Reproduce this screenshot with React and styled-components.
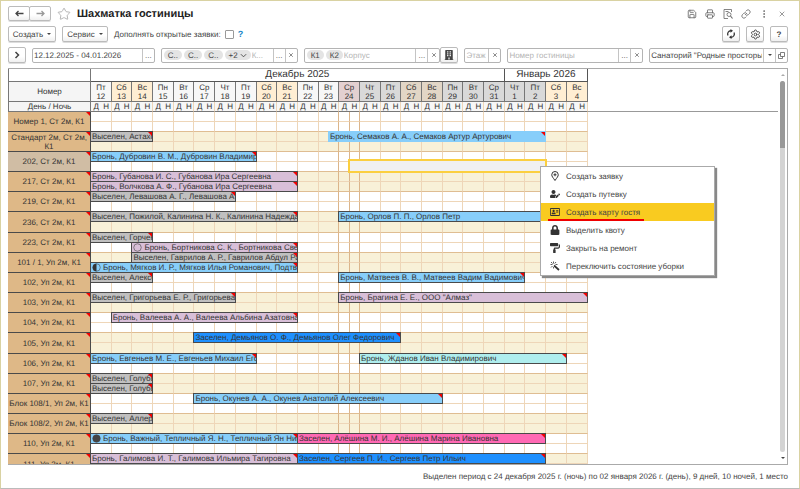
import React from 'react';
import { default as styled, createGlobalStyle, css } from 'styled-components';
import {
  Link,
  MoreVertical,
  Printer,
  Save,
  Settings,
  Star,
  X,
} from 'lucide-react';
import {
  FaBuilding,
  FaLock,
  FaPaintRoller,
  FaRegAddressCard,
  FaUserEdit,
} from 'react-icons/fa';

const BRONZE = '#deb887';
const LINE = '#eed6b8';
const DARK = '#4a4a4a';

const colors = {
  gray: '#c0c0c0',
  sky: '#87cefa',
  thistle: '#d8bfd8',
  blue: '#1e90ff',
  mint: '#afeeee',
  pink: '#ff69b4',
};

const GlobalStyle = createGlobalStyle`
  * {
    box-sizing: border-box;
  }

  body {
    margin: 0;
    background: #fff;
    color: #444;
    font-family: 'Liberation Sans', Arial, sans-serif;
    font-size: 8px;
    text-rendering: geometricPrecision;
  }

  button, input, select {
    font: inherit;
    color: inherit;
    text-rendering: inherit;
  }
`;

const Window = styled.div`
  position: relative;
  display: flex;
  flex-direction: column;
  height: 100vh;
  padding: 4px 11px 0 7px;
  border: 1px solid #d9d2a2;
  border-bottom-color: #bbb;
`;

const TitleBar = styled.header`
  display: flex;
  align-items: center;
  height: 17px;
`;

const Title = styled.h1`
  flex: 1;
  margin: 0 0 0 6px;
  color: #222;
  font-size: 11px;
  font-weight: bold;
`;

const TitleActions = styled.div`
  display: flex;
  gap: 6px;
`;

const IconButton = styled.button`
  display: flex;
  align-items: center;
  justify-content: center;
  width: 12px;
  height: 12px;
  padding: 0;
  border: 0;
  background: none;
  color: #666;
`;

const Button = styled.button`
  display: flex;
  flex: none;
  align-items: center;
  justify-content: center;
  gap: 4px;
  width: ${({ $width }) => $width || 18}px;
  height: 16px;
  padding: 0;
  border: 1px solid #bbb;
  border-radius: 2px;
  background: linear-gradient(#fff 60%, #f0f0f0);
  box-shadow: 0 1px 0 #ddd;
  color: #444;
`;

const NavGroup = styled.div`
  display: flex;
  margin-right: 6px;

  button {
    width: 22px;
    height: 15px;
  }

  button + button {
    margin-left: -1px;
    color: #999;
  }
`;

const Caret = styled.span`
  border: 2px solid transparent;
  border-top-color: #444;
  border-bottom: 0;
`;

const CommandBar = styled.div`
  display: flex;
  align-items: center;
  gap: 6px;
  height: 24px;
`;

const OpenOrders = styled.label`
  display: flex;
  align-items: center;
  gap: 4px;
  margin-right: -2px;

  input {
    appearance: none;
    width: 9px;
    height: 9px;
    margin: 0;
    border: 1px solid #999;
    border-radius: 1px;
  }
`;

const HelpLink = styled.a`
  flex: 1;
  color: #1a87c9;
  font-size: 9px;
  font-weight: bold;
  text-decoration: none;
`;

const Filters = styled.div`
  display: flex;
  align-items: center;
  gap: 6px;
  height: 18px;
  margin-bottom: 4px;
`;

const Field = styled.div`
  display: flex;
  flex: ${({ $size }) => `${$size} 1 ${$size}px`};
  min-width: 0;
  height: 15px;
  border: 1px solid #b4b4b4;
  border-radius: 2px;

  input, select {
    flex: 1;
    min-width: 0;
    padding: 0 1px;
    border: 0;
    outline: 0;
    background: none;
    appearance: none;
  }

  input::placeholder {
    color: #b4b4b4;
  }

  > button {
    flex: none;
    width: 12px;
    height: auto;
    border-left: 1px solid #c4c4c4;
  }
`;

const WithButton = styled.div`
  display: flex;
  align-items: center;
  flex: 155 1 155px;
  min-width: 0;
`;

const Chip = styled.span`
  display: flex;
  align-items: center;
  align-self: center;
  gap: 2px;
  height: 10px;
  margin-left: 2px;
  padding: 0 4px;
  border-radius: 5px;
  background: #e4e4e4;
`;

const Panel = styled.main`
  display: flex;
  flex: 1;
  min-height: 0;
  overflow: hidden;
  border: 1px solid #aaa;
  border-left: 0;
`;

const Planner = styled.table`
  flex: 0 1 580px;
  width: 580px;
  align-self: flex-start;
  border-collapse: separate;
  border-spacing: 0;
  table-layout: fixed;
  color: #333;

  th, td {
    padding: 0;
    font-weight: normal;
  }
`;

const LabelCol = styled.col`
  width: 83px;
`;

const HeadLabel = styled.th`
  height: ${({ $height }) => $height}px;
  border: solid #777;
  border-width: 0 1px 1px 1px;
  background: ${({ $shaded }) => ($shaded ? '#f5f5f5' : '#fff')};
`;

const Month = styled.th`
  height: 13px;
  border: solid #555;
  border-width: 0 1px 1px 0;
  font-size: 10px;
  line-height: 12px;
`;

const DayHead = styled.th`
  height: 20px;
  border: solid #777;
  border-width: 0 1px 1px 0;
  background: ${({ $tone }) => $tone};
  line-height: 9px;
`;

const HalfHead = styled.th`
  height: 10px;
  border-bottom: 1px solid #777;
  border-right: ${({ $last }) => ($last ? `1px solid ${LINE}` : 0)};
  background: #f7f7f7;
  line-height: 8px;
`;

const corner = css`
  &::after {
    content: '';
    position: absolute;
    top: 0;
    right: 0;
    border-top: 4px solid #f00000;
    border-left: 4px solid transparent;
  }
`;

const RoomLabel = styled.th`
  position: relative;
  border: solid ${DARK};
  border-width: 0 1px 1px 0;
  background: ${({ $selected }) => ($selected ? '#d0bda4' : BRONZE)};
  line-height: 9px;
  ${corner}
`;

const Room = styled.tbody`
  background: ${({ $shaded }) => ($shaded ? '#f8f1d8' : '#fff')};

  td {
    height: 10px;
  }

  &:nth-of-type(6n) tr:last-child td {
    height: 11px;
  }

  tr:last-child td {
    border-bottom-color: #dfbd92;
  }
`;

const Free = styled.td`
  border: solid ${LINE};
  border-width: 0 1px 1px 0;
  ${({ $today }) => $today && 'border-right-color: #dbb58a;'}
`;

const BookingCell = styled.td`
  vertical-align: top;
`;

const Booking = styled.div`
  position: relative;
  z-index: 1;
  display: flex;
  align-items: center;
  gap: 2px;
  height: 11px;
  margin: -1px 0 0 -1px;
  padding-left: 1px;
  overflow: hidden;
  border: 1px solid ${({ $plain }) => ($plain ? '#87cefa' : DARK)};
  background: ${({ $color }) => $color};
  line-height: 9px;
  white-space: nowrap;
  ${corner}

  svg {
    flex: none;
  }
`;

const Selection = styled.div`
  position: relative;
  z-index: 2;
  height: 14px;
  margin: -3px -1px -1px -2px;
  border: 2px solid #fbcf3f;
  background: #f0f0f0;
`;

const Tail = styled.div`
  flex: 1;
  height: 43px;
  border-bottom: 1px solid #999;
`;

const ScrollBar = styled.div`
  display: flex;
  flex-direction: column;
  align-items: center;
  width: 9px;
  padding: 5px 0;
`;

const Track = styled.div`
  flex: 1;
  width: 5px;
  margin: 5px 0;
  border-radius: 3px;
  background: #d4d4d4;
`;

const Thumb = styled.div`
  height: 18%;
  border-radius: 3px 3px 0 0;
  background: #999;
`;

const Arrow = styled.span`
  border: 2px solid transparent;
  ${({ $up }) => ($up
    ? 'border-bottom-color: #aaa; border-top: 0;'
    : 'border-top-color: #444; border-bottom: 0;')}
`;

const Status = styled.footer`
  height: 23px;
  line-height: 23px;
  text-align: right;
`;

const Menu = styled.div`
  position: absolute;
  z-index: 5;
  top: 165px;
  left: 539px;
  width: 175px;
  border: 1px solid #aaa;
  background: #fff;
  box-shadow: 2px 2px 1px #888;
`;

const MenuItem = styled.button`
  display: flex;
  align-items: center;
  gap: 6px;
  width: 100%;
  height: 18px;
  padding: 0 9px;
  border: 0;
  background: ${({ $active }) => ($active ? '#f9cb20' : 'none')};
  text-align: left;

  svg {
    flex: none;
    color: #333;
  }

  span {
    position: relative;
  }
`;

const Underline = styled.i`
  position: absolute;
  right: -4px;
  bottom: -4px;
  left: -18px;
  height: 2px;
  background: #f00000;
`;

const weekdays = ['Пн', 'Вт', 'Ср', 'Чт', 'Пт', 'Сб', 'Вс'];
const days = Array.from({ length: 24 }, (_, i) => {
  const weekday = (i + 4) % 7;
  const weekend = weekday > 4;
  let tone = weekend ? '#ffeed3' : '#f7f7f7';
  if (i === 12) tone = '#e3d0d0';
  if (i > 12 && i < 22) tone = weekend ? '#e2d6c6' : '#d9d9d9';
  return { name: weekdays[weekday], date: i < 20 ? i + 12 : i - 19, tone };
});
const TODAY = 12;

// start and end are counted in half days from the first column
const b = (start, end, color, text, rest) => ({ start, end, color, text, ...rest });

const rooms = [
  { name: 'Номер 1, Ст 2м, К1', lanes: [[], []] },
  {
    name: 'Стандарт 2м, Ст 2м, К1',
    lanes: [
      [
        b(0, 6, 'gray', 'Выселен, Астахо'),
        b(23, 44, 'sky', 'Бронь, Семаков А. А., Семаков Артур Артурович', { plain: true }),
      ],
      [],
    ],
  },
  {
    name: '202, Ст 2м, К1',
    selected: true,
    lanes: [
      [b(0, 16, 'sky', 'Бронь, Дубровин В. М., Дубровин Владимир')],
      [{ start: 25, end: 44, selection: true }],
    ],
  },
  {
    name: '217, Ст 2м, К1',
    lanes: [
      [b(0, 20, 'thistle', 'Бронь, Губанова И. С., Губанова Ира Сергеевна')],
      [b(0, 20, 'thistle', 'Бронь, Волчкова А. Ф., Губанова Ира Сергеевна')],
    ],
  },
  {
    name: '219, Ст 2м, К1',
    lanes: [[b(0, 14, 'gray', 'Выселен, Левашова А. Г., Левашова А')], []],
  },
  {
    name: '236, Ст 2м, К1',
    lanes: [
      [
        b(0, 20, 'gray', 'Выселен, Пожилой, Калинина Н. К., Калинина Надежда К'),
        b(24, 44, 'sky', 'Бронь, Орлов П. П., Орлов Петр'),
      ],
      [],
    ],
  },
  {
    name: '223, Ст 2м, К1',
    lanes: [
      [b(0, 6, 'gray', 'Выселен, Горчен')],
      [b(4, 20, 'thistle', 'Бронь, Бортникова С. К., Бортникова Светл', { moon: 'new' })],
    ],
  },
  {
    name: '101 / 1, Уп 2м, К1',
    lanes: [
      [b(4, 20, 'gray', 'Выселен, Гаврилов А. Р., Гаврилов Абдул Ра')],
      [b(0, 20, 'sky', 'Бронь, Мягков И. Р., Мягков Илья Романович, Подтве', { moon: 'half' })],
    ],
  },
  {
    name: '102, Уп 2м, К1',
    lanes: [
      [
        b(0, 6, 'gray', 'Выселен, Алексе'),
        b(24, 42, 'sky', 'Бронь, Матвеев В. В., Матвеев Вадим Вадимович'),
      ],
      [],
    ],
  },
  {
    name: '103, Уп 2м, К1',
    lanes: [
      [
        b(0, 14, 'gray', 'Выселен, Григорьева Е. Р., Григорьева'),
        b(24, 48, 'thistle', 'Бронь, Брагина Е. Е., ООО "Алмаз"'),
      ],
      [],
    ],
  },
  {
    name: '104, Уп 2м, К1',
    lanes: [[b(2, 20, 'thistle', 'Бронь, Валеева А. А., Валеева Альбина Азатовна')], []],
  },
  {
    name: '105, Уп 2м, К1',
    lanes: [[b(10, 30, 'blue', 'Заселен, Демьянов О. Ф., Демьянов Олег Федорович')], []],
  },
  {
    name: '106, Уп 2м, К1',
    lanes: [
      [
        b(0, 16, 'sky', 'Бронь, Евгеньев М. Е., Евгеньев Михаил Его'),
        b(26, 46, 'mint', 'Бронь, Жданов Иван Владимирович'),
      ],
      [],
    ],
  },
  {
    name: '107, Уп 2м, К1',
    lanes: [
      [b(0, 6, 'gray', 'Выселен, Голубь')],
      [b(0, 6, 'gray', 'Выселен, Голубь')],
    ],
  },
  {
    name: 'Блок 108/1, Уп 2м, К1',
    lanes: [[b(10, 34, 'sky', 'Бронь, Окунев А. А., Окунев Анатолий Алексеевич')], []],
  },
  {
    name: 'Блок 108/2, Уп 2м, К1',
    lanes: [[b(0, 6, 'gray', 'Выселен, Аллер')], []],
  },
  {
    name: '110, Уп 2м, К1',
    lanes: [
      [
        b(0, 20, 'sky', 'Бронь, Важный, Тепличный Я. Н., Тепличный Ян Никол', { moon: 'full' }),
        b(20, 44, 'pink', 'Заселен, Алёшина М. И., Алёшина Марина Ивановна'),
      ],
      [],
    ],
  },
  {
    name: '111, Уп 2м, К1',
    lanes: [
      [
        b(0, 20, 'thistle', 'Бронь, Галимова И. Т., Галимова Ильмира Тагировна'),
        b(20, 44, 'blue', 'Заселен, Сергеев П. И., Сергеев Петр Ильич'),
      ],
      [],
    ],
  },
];

const Moon = ({ phase }) => (
  <svg width="9" height="9" viewBox="0 0 18 18">
    <circle
      cx="9"
      cy="9"
      r="7.5"
      fill={phase === 'full' ? '#444' : 'none'}
      stroke="#444"
      strokeWidth="1.2"
    />
    {phase === 'half' && <path d="M9 1.5a7.5 7.5 0 0 0 0 15z" fill="#333" />}
  </svg>
);

const renderLane = (bookings) => {
  const cells = [];
  let pos = 0;
  while (pos < 48) {
    const start = pos;
    const item = bookings.find((booking) => booking.start === start);
    if (item) {
      cells.push(
        <BookingCell key={start} colSpan={item.end - item.start}>
          {item.selection ? (
            <Selection />
          ) : (
            <Booking $color={colors[item.color]} $plain={item.plain}>
              {item.moon && <Moon phase={item.moon} />}
              {item.text}
            </Booking>
          )}
        </BookingCell>
      );
      pos = item.end;
    } else {
      const day = Math.floor(start / 2);
      const split = day === TODAY || start % 2 === 1
        || bookings.some((booking) => booking.start === start + 1);
      const span = split ? 1 : 2;
      cells.push(
        <Free
          key={start}
          colSpan={span}
          $today={day === TODAY || start + span === TODAY * 2}
        />
      );
      pos += span;
    }
  }
  return cells;
};

const Schedule = () => (
  <Planner>
    <colgroup>
      <LabelCol />
      {days.map(({ date }) => (
        <React.Fragment key={date}>
          <col />
          <col />
        </React.Fragment>
      ))}
    </colgroup>
    <thead>
      <tr>
        <HeadLabel $height={13} />
        <Month colSpan={40}>Декабрь 2025</Month>
        <Month colSpan={8}>Январь 2026</Month>
      </tr>
      <tr>
        <HeadLabel $height={20} $shaded>Номер</HeadLabel>
        {days.map(({ name, date, tone }) => (
          <DayHead key={date} colSpan={2} $tone={tone}>
            {name}
            <br />
            {date}
          </DayHead>
        ))}
      </tr>
      <tr>
        <HeadLabel $height={10} $shaded>День / Ночь</HeadLabel>
        {days.map(({ date }) => (
          <React.Fragment key={date}>
            <HalfHead>Д</HalfHead>
            <HalfHead $last>Н</HalfHead>
          </React.Fragment>
        ))}
      </tr>
    </thead>
    {rooms.map(({ name, lanes, selected }, index) => (
      <Room key={name} $shaded={index % 2 === 1}>
        {lanes.map((lane, i) => (
          <tr key={i}>
            {i === 0 && (
              <RoomLabel rowSpan={2} scope="rowgroup" $selected={selected}>
                {name}
              </RoomLabel>
            )}
            {renderLane(lane)}
          </tr>
        ))}
      </Room>
    ))}
  </Planner>
);

const ArrowIcon = ({ flip }) => (
  <svg width="9" height="7" viewBox="0 0 18 14">
    <path
      d={flip ? 'M1 7h15M11 2l5 5-5 5' : 'M17 7H2M7 2L2 7l5 5'}
      fill="none"
      stroke="currentColor"
      strokeWidth="2.6"
    />
  </svg>
);

const ChevronIcon = ({ down, size = 8 }) => (
  <svg width={size} height={size} viewBox="0 0 16 16">
    <path
      d={down ? 'M2 5l6 6 6-6' : 'M5 2l6 6-6 6'}
      fill="none"
      stroke="currentColor"
      strokeWidth={down ? 2 : 3}
    />
  </svg>
);

const RefreshIcon = () => (
  <svg width="10" height="10" viewBox="0 0 20 20">
    <path
      d="M4 13A6.5 6.5 0 0 1 10 3.5M16 7a6.5 6.5 0 0 1-6 9.5"
      fill="none"
      stroke="#333"
      strokeWidth="2.6"
    />
    <path d="M9 0l5 3.5-5 4zM11 20l-5-3.5 5-4z" fill="#333" />
  </svg>
);

const OpenIcon = () => (
  <svg width="7" height="7" viewBox="0 0 14 14" fill="none" stroke="#555" strokeWidth="1.5">
    <path d="M5 1h8v8H5zM5 5H1v8h8V9" />
  </svg>
);

const PreviewIcon = ({ size }) => (
  <svg width={size} height={size} viewBox="0 0 20 20" fill="none" stroke="currentColor" strokeWidth="1.6">
    <path d="M17 6V1H2v18h8M5 5h6" />
    <circle cx="12" cy="11" r="4" />
    <path d="M15 14l4 5" strokeWidth="2.2" />
  </svg>
);

const PinIcon = ({ size }) => (
  <svg width={size} height={size} viewBox="0 0 20 20" fill="none" stroke="currentColor" strokeWidth="2">
    <path d="M10 19C6 13 3.5 11 3.5 7.5a6.5 6.5 0 0 1 13 0C16.5 11 14 13 10 19z" />
    <path d="M10 4.5v6M7 7.5h6" />
  </svg>
);

const WandIcon = ({ size }) => (
  <svg width={size} height={size} viewBox="0 0 20 20" fill="none" stroke="currentColor">
    <path d="M8 9l10 9" strokeWidth="3.5" />
    <path d="M7 1v4M1 7h4M2 2l3 3M12 2l-2.5 3M2 13l3-3M7 12v3M11 7h4" strokeWidth="1.6" />
  </svg>
);

const PickButton = () => <IconButton aria-label="Выбрать">...</IconButton>;

const ClearButton = () => (
  <IconButton aria-label="Очистить">
    <X size={6} strokeWidth={3} />
  </IconButton>
);

const titleIcons = [
  ['Сохранить', Save],
  ['Печать', Printer],
  ['Просмотр', PreviewIcon],
  ['Ссылка', Link],
  ['Ещё', MoreVertical],
  ['Закрыть', X],
];

const menuItems = [
  ['Создать заявку', PinIcon],
  ['Создать путевку', FaUserEdit],
  ['Создать карту гостя', FaRegAddressCard],
  ['Выделить квоту', FaLock],
  ['Закрыть на ремонт', FaPaintRoller],
  ['Переключить состояние уборки', WandIcon],
];

const App = () => (
  <Window>
    <GlobalStyle />

    <TitleBar>
      <NavGroup>
        <Button aria-label="Назад"><ArrowIcon /></Button>
        <Button aria-label="Вперед"><ArrowIcon flip /></Button>
      </NavGroup>
      <Star size={14} strokeWidth={1.5} color="#aaa" />
      <Title>Шахматка гостиницы</Title>
      <TitleActions>
        {titleIcons.map(([label, Icon]) => (
          <IconButton key={label} aria-label={label}>
            <Icon size={label === 'Закрыть' ? 8 : 10} />
          </IconButton>
        ))}
      </TitleActions>
    </TitleBar>

    <CommandBar>
      <Button $width={48}>Создать <Caret /></Button>
      <Button $width={46}>Сервис <Caret /></Button>
      <OpenOrders>
        Дополнять открытые заявки:
        <input type="checkbox" />
      </OpenOrders>
      <HelpLink href="#help">?</HelpLink>
      <Button aria-label="Обновить"><RefreshIcon /></Button>
      <Button aria-label="Настройки"><Settings size={11} /></Button>
      <Button aria-label="Справка"><b>?</b></Button>
    </CommandBar>

    <Filters>
      <Button aria-label="Развернуть"><ChevronIcon /></Button>
      <Field $size={123}>
        <input aria-label="Период" defaultValue="12.12.2025 - 04.01.2026" />
        <PickButton />
      </Field>
      <Field $size={137}>
        <Chip>С..</Chip>
        <Chip>С..</Chip>
        <Chip>С..</Chip>
        <Chip>+2 <ChevronIcon down size={7} /></Chip>
        <input aria-label="Категория" placeholder="К..." />
        <PickButton />
        <ClearButton />
      </Field>
      <WithButton>
        <Field $size={138}>
          <Chip>К1</Chip>
          <Chip>К2</Chip>
          <input aria-label="Корпус" placeholder="Корпус" />
          <PickButton />
          <ClearButton />
        </Field>
        <Button aria-label="Корпуса"><FaBuilding size={10} /></Button>
      </WithButton>
      <Field $size={37}>
        <input aria-label="Этаж" placeholder="Этаж" />
        <ClearButton />
      </Field>
      <Field $size={136}>
        <input aria-label="Номер гостиницы" placeholder="Номер гостиницы" />
        <PickButton />
        <ClearButton />
      </Field>
      <Field $size={139}>
        <select aria-label="Организация">
          <option>Санаторий "Родные просторы"</option>
        </select>
        <IconButton aria-label="Список"><Caret /></IconButton>
        <IconButton aria-label="Открыть"><OpenIcon /></IconButton>
      </Field>
    </Filters>

    <Panel>
      <Schedule />
      <Tail />
      <ScrollBar>
        <Arrow $up />
        <Track><Thumb /></Track>
        <Arrow />
      </ScrollBar>
    </Panel>

    <Status>
      Выделен период с 24 декабря 2025 г. (ночь) по 02 января 2026 г. (день), 9 дней, 10 ночей, 1 место
    </Status>

    <Menu role="menu">
      {menuItems.map(([label, Icon], index) => (
        <MenuItem key={label} role="menuitem" $active={index === 2}>
          <Icon size={10} />
          <span>
            {label}
            {index === 2 && <Underline />}
          </span>
        </MenuItem>
      ))}
    </Menu>
  </Window>
);

export default App;
